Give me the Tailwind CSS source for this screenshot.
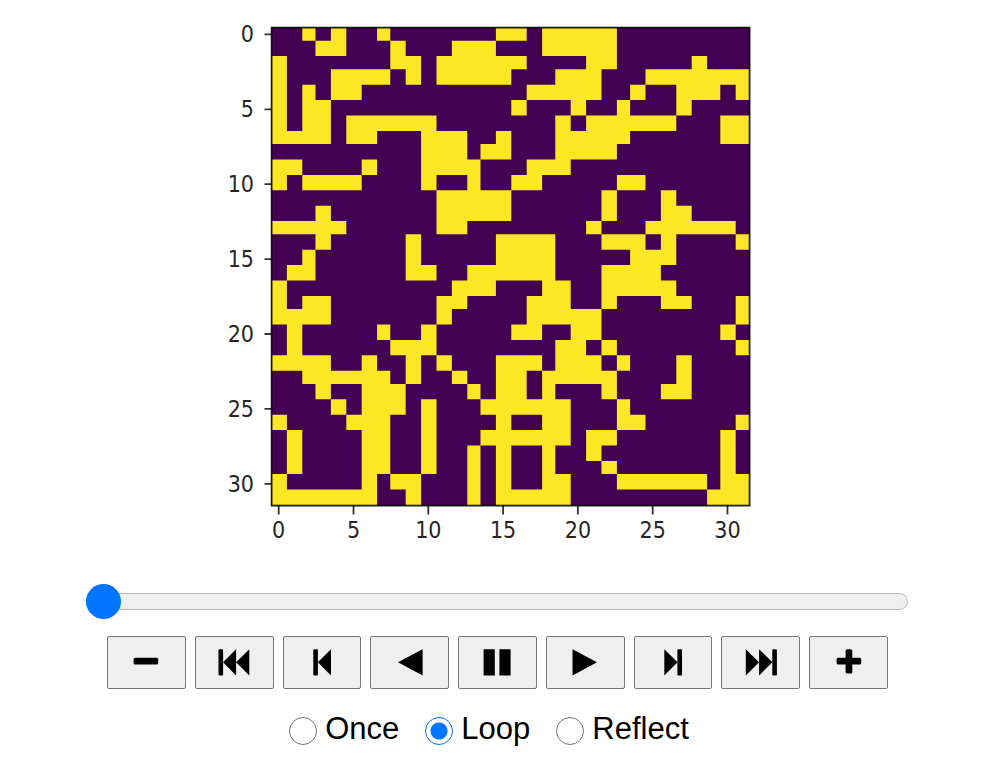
<!DOCTYPE html>
<html lang="en">
<head>
<meta charset="utf-8">
<meta name="viewport" content="width=device-width, initial-scale=1">
<title>Cellular automaton animation</title>
<script src="https://cdn.jsdelivr.net/npm/@tailwindcss/browser@4"></script>
</head>
<body class="bg-white text-black font-['Liberation_Sans',Arial,sans-serif]">
<main class="flex flex-col pt-[15px] pl-[86px] pr-[90px] pb-6">
  <svg class="mx-auto block w-[554px] max-w-full" viewBox="220 15 554 530" role="img" aria-label="Grid state, 32 by 32 cells">
    <rect x="271.5" y="27.5" width="478" height="478" fill="#440154"/>
    <path id="cells" fill="#fde725" shape-rendering="geometricPrecision"/>
    <rect x="271.6" y="27.6" width="478" height="478" fill="none" stroke="#000" stroke-opacity=".85" stroke-width="1.8"/>
    <g id="ticks" stroke="#000" stroke-opacity=".8" stroke-width="1.8"></g>
    <g id="labels" class="font-['DejaVu_Sans_Condensed','DejaVu_Sans',sans-serif] text-[23px]" fill="#262626"></g>
  </svg>

  <input type="range" min="0" max="100" value="0" aria-label="Frame"
    class="mt-[39px] block h-[35px] w-full appearance-none bg-transparent [&::-webkit-slider-runnable-track]:h-[17px] [&::-webkit-slider-runnable-track]:rounded-full [&::-webkit-slider-runnable-track]:border [&::-webkit-slider-runnable-track]:border-[#b8b8b8] [&::-webkit-slider-runnable-track]:bg-[#efefef] [&::-webkit-slider-thumb]:mt-[-10px] [&::-webkit-slider-thumb]:ml-[-1px] [&::-webkit-slider-thumb]:size-[35px] [&::-webkit-slider-thumb]:appearance-none [&::-webkit-slider-thumb]:rounded-full [&::-webkit-slider-thumb]:bg-[#0075ff]">

  <div class="mt-[17px] grid grid-cols-9 gap-[9px] pr-5 pl-[21px]">
    <button type="button" aria-label="Slower" class="flex h-[53px] items-center justify-center rounded-[2px] border border-[#767676] bg-[#efefef]"><svg class="h-[30px] w-10" viewBox="0 0 40 30"><rect x="7.6" y="9.8" width="24.6" height="6.7" rx="1.6"/></svg></button>
    <button type="button" aria-label="First frame" class="flex h-[53px] items-center justify-center rounded-[2px] border border-[#767676] bg-[#efefef]"><svg class="h-[30px] w-10" viewBox="0 0 40 30"><rect x="4.5" y="1.2" width="4.6" height="26.3" rx=".8"/><path d="M9 14.3 22.1 1.2v26.3zM22.1 14.3 35.3 1.2v26.3z"/></svg></button>
    <button type="button" aria-label="Previous frame" class="flex h-[53px] items-center justify-center rounded-[2px] border border-[#767676] bg-[#efefef]"><svg class="h-[30px] w-10" viewBox="0 0 40 30"><rect x="11.3" y="1.2" width="4.6" height="26.3" rx=".8"/><path d="M15.8 14.3 29 1.2v26.3z"/></svg></button>
    <button type="button" aria-label="Play backwards" class="flex h-[53px] items-center justify-center rounded-[2px] border border-[#767676] bg-[#efefef]"><svg class="h-[30px] w-10" viewBox="0 0 40 30"><path d="M8 14.3 32.6 1.2v26.3z"/></svg></button>
    <button type="button" aria-label="Pause" class="flex h-[53px] items-center justify-center rounded-[2px] border border-[#767676] bg-[#efefef]"><svg class="h-[30px] w-10" viewBox="0 0 40 30"><rect x="6.6" y="1.2" width="11.2" height="26.3" rx=".5"/><rect x="22.4" y="1.2" width="11.2" height="26.3" rx=".5"/></svg></button>
    <button type="button" aria-label="Play" class="flex h-[53px] items-center justify-center rounded-[2px] border border-[#767676] bg-[#efefef]"><svg class="h-[30px] w-10" viewBox="0 0 40 30"><path d="M32 14.3 7.5 1.2v26.3z"/></svg></button>
    <button type="button" aria-label="Next frame" class="flex h-[53px] items-center justify-center rounded-[2px] border border-[#767676] bg-[#efefef]"><svg class="h-[30px] w-10" viewBox="0 0 40 30"><rect x="24.4" y="1.2" width="4.6" height="26.3" rx=".8"/><path d="M24.6 14.3 11.3 1.2v26.3z"/></svg></button>
    <button type="button" aria-label="Last frame" class="flex h-[53px] items-center justify-center rounded-[2px] border border-[#767676] bg-[#efefef]"><svg class="h-[30px] w-10" viewBox="0 0 40 30"><rect x="31.3" y="1.2" width="4.6" height="26.3" rx=".8"/><path d="M18.1 14.3 4.8 1.2v26.3zM31.4 14.3 18.1 1.2v26.3z"/></svg></button>
    <button type="button" aria-label="Faster" class="flex h-[53px] items-center justify-center rounded-[2px] border border-[#767676] bg-[#efefef]"><svg class="h-[30px] w-10" viewBox="0 0 40 30"><rect x="7.6" y="9.8" width="24.6" height="6.7" rx="1.6"/><rect x="16.6" y="1.2" width="6.7" height="24.4" rx="1.6"/></svg></button>
  </div>

  <div role="radiogroup" aria-label="Loop mode" class="mt-[25px] flex justify-center gap-[26px] pr-4 text-[31px] leading-[30px]">
    <label class="flex items-start gap-2"><input type="radio" name="mode" class="mt-[3px] size-7 appearance-none rounded-full border border-[#767676] bg-white checked:border-[#0075ff] checked:bg-[radial-gradient(circle,#0075ff_8px,white_9px)]">Once</label>
    <label class="flex items-start gap-2"><input type="radio" name="mode" checked class="mt-[3px] size-7 appearance-none rounded-full border border-[#767676] bg-white checked:border-[#0075ff] checked:bg-[radial-gradient(circle,#0075ff_8px,white_9px)]">Loop</label>
    <label class="flex items-start gap-2"><input type="radio" name="mode" class="mt-[3px] size-7 appearance-none rounded-full border border-[#767676] bg-white checked:border-[#0075ff] checked:bg-[radial-gradient(circle,#0075ff_8px,white_9px)]">Reflect</label>
  </div>
</main>
<script>
// Live cells of each row, as column numbers and column ranges.
const rows = [
  "2 4 7 15-16 18-22",
  "3-4 8 12-14 18-22",
  "0 8-9 11-16 21-22 28",
  "0 4-7 9 11-15 19-21 25-31",
  "0 2 4-5 17-21 24 27-29 31",
  "0 2-3 16 20 23 27",
  "0 2-3 5-10 19 21-26 30-31",
  "0-3 5-6 10-12 15 19-23 30-31",
  "10-12 14-15 19-22",
  "0-1 6 10-13 17-19",
  "0 2-5 10 13 16-17 23-24",
  "11-15 22 26",
  "3 11-15 22 26-27",
  "0-4 11-12 21 25-30",
  "3 9 15-18 22-24 26 31",
  "2 9 15-18 24-26",
  "1-2 9-10 13-18 22-25",
  "0 12-14 18-19 22-26",
  "0 2-3 11-12 17-19 22 26-27 31",
  "0-3 11 17-21 31",
  "1 7 10 16-17 20-21 30",
  "1 8-10 19-20 22 31",
  "0-3 6 9 11 15-17 19-21 23 27",
  "2-7 9 12 15-16 18-22 27",
  "3 6-8 13 15-16 18 22 26-27",
  "4 6-8 10 14-19 23",
  "0 5-7 10 15 18-19 23-24 31",
  "1 6-7 10 14-19 21-22 30",
  "1 6-7 10 13 15 18 21 30",
  "1 6-7 10 13 15 18 22 30",
  "0 6 8-9 13 15 18-19 23-28 30-31",
  "0-6 9 13 15-19 29-31"
];
// Cells are 7 raster units wide, except the listed ones, which are 6.
const edges = (start, end, narrow) => {
  const out = [start];
  for (let i = 0, u = 0; i < 32; i++) {
    u += narrow.includes(i) ? 6 : 7;
    out.push(Math.min(end, start + u * 2.2));
  }
  out[32] = end;
  return out;
};
const xs = edges(271.5, 749.5, [2, 7, 13, 18, 23, 29]);
const ys = edges(27.5, 505.5, [0, 2, 7, 13, 18, 23, 29]);
let d = "";
rows.forEach((row, r) => row.split(" ").forEach(run => {
  const [a, b = a] = run.split("-").map(Number);
  d += `M${xs[a]} ${ys[r]}H${xs[b + 1]}V${ys[r + 1]}H${xs[a]}z`;
}));
document.getElementById("cells").setAttribute("d", d);

let ticks = "", labels = "";
for (let i = 0; i < 7; i++) {
  const x = 278.7 + i * 74.8, y = 34.4 + i * 74.9;
  ticks += `<path d="M${x} 505.5v9M264.5 ${y}h7"/>`;
  labels += `<text x="${x}" y="538" text-anchor="middle">${i * 5}</text>`;
  labels += `<text x="254" y="${y + 8}" text-anchor="end">${i * 5}</text>`;
}
document.getElementById("ticks").innerHTML = ticks;
document.getElementById("labels").innerHTML = labels;
</script>
</body>
</html>
